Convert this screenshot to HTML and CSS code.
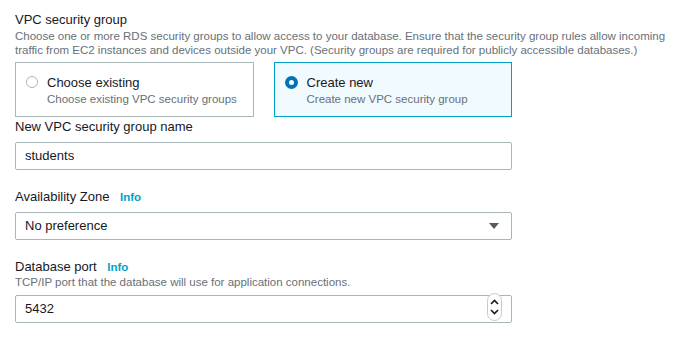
FILE: index.html
```html
<!DOCTYPE html>
<html>
<head>
<meta charset="utf-8">
<link rel="stylesheet" href="styles.css">
</head>
<body>
<div class="page">
  <div class="section">
    <div class="title">VPC security group</div>
    <div class="desc">Choose one or more RDS security groups to allow access to your database. Ensure that the security group rules allow incoming<br>traffic from EC2 instances and devices outside your VPC. (Security groups are required for publicly accessible databases.)</div>
    <div class="tiles">
      <div class="tile">
        <span class="radio"></span>
        <div class="tile-text">
          <div class="tile-title">Choose existing</div>
          <div class="tile-sub">Choose existing VPC security groups</div>
        </div>
      </div>
      <div class="tile selected">
        <span class="radio checked"></span>
        <div class="tile-text">
          <div class="tile-title">Create new</div>
          <div class="tile-sub">Create new VPC security group</div>
        </div>
      </div>
    </div>
  </div>

  <div class="field first">
    <div class="label">New VPC security group name</div>
    <div class="input">students</div>
  </div>

  <div class="field">
    <div class="label">Availability Zone <span class="info">Info</span></div>
    <div class="input select">
      <span>No preference</span>
      <svg class="caret" width="10" height="6" viewBox="0 0 10 6"><path d="M0 0H10L5 6Z" fill="#545b64"/></svg>
    </div>
  </div>

  <div class="field">
    <div class="label">Database port <span class="info">Info</span></div>
    <div class="desc small">TCP/IP port that the database will use for application connections.</div>
    <div class="input number">
      <span>5432</span>
      <span class="spinner">
        <svg width="15" height="28" viewBox="0 0 15 28"><path d="M4 11L7.5 7.5L11 11" fill="none" stroke="#16191f" stroke-width="1.6"/><path d="M4 17L7.5 20.5L11 17" fill="none" stroke="#16191f" stroke-width="1.6"/></svg>
      </span>
    </div>
  </div>
</div>
</body>
</html>
```

FILE: styles.css
```css
html, body {
  margin: 0;
  padding: 0;
  background: #ffffff;
}
body {
  font-family: "Liberation Sans", Arial, sans-serif;
  color: #16191f;
}
.page {
  padding: 10px 0 0 15px;
  width: 497px;
}
.title {
  font-size: 13px;
  line-height: 19px;
}
.desc {
  font-size: 11.5px;
  line-height: 14px;
  color: #687078;
  white-space: nowrap;
}
.tiles {
  display: flex;
  gap: 20px;
  margin-top: 5px;
}
.tile {
  flex: 1;
  height: 55px;
  box-sizing: border-box;
  border: 1px solid #aab7b8;
  display: flex;
  align-items: flex-start;
  padding: 11px 0 0 10px;
  gap: 9px;
}
.tile.selected {
  border-color: #00a1c9;
  background: #f1faff;
}
.radio {
  width: 12px;
  height: 12px;
  border: 1px solid #aab7b8;
  border-radius: 50%;
  box-sizing: border-box;
  margin-top: 2px;
  background: #fff;
  flex: none;
}
.radio.checked {
  border: 4px solid #0073bb;
  width: 13px;
  height: 13px;
}
.tile-title {
  font-size: 13px;
  line-height: 17px;
}
.tile-sub {
  font-size: 11.5px;
  line-height: 17px;
  color: #687078;
}
.field {
  margin-top: 17px;
}
.field.first {
  margin-top: 0;
}
.label {
  font-size: 13px;
  line-height: 20px;
}
.info {
  color: #00a1c9;
  font-weight: bold;
  font-size: 11.5px;
  margin-left: 7px;
}
.desc.small {
  line-height: 16px;
  margin-top: -3px;
}
.input {
  margin-top: 5px;
  height: 28px;
  box-sizing: border-box;
  border: 1px solid #aab7b8;
  border-radius: 2px;
  font-size: 13px;
  line-height: 26px;
  padding: 0 9px;
  display: flex;
  align-items: center;
  justify-content: space-between;
}
.number {
  position: relative;
}
.spinner {
  position: absolute;
  right: 9px;
  top: -3px;
  width: 15px;
  height: 28px;
  box-sizing: border-box;
  border: 1px solid #c5cbcc;
  border-radius: 8px;
  background: #fff;
  display: flex;
  align-items: center;
  justify-content: center;
}
.spinner svg {
  display: block;
  flex: none;
}
.caret {
  margin-right: 3px;
}
```
